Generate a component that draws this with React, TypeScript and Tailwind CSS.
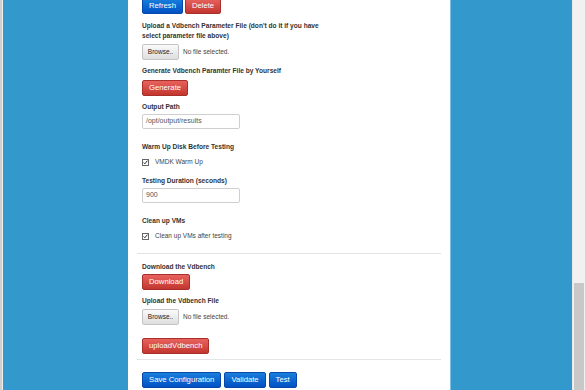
import React from 'react';

const font = { fontFamily: '"Liberation Sans", Arial, sans-serif' };

const Btn = ({ color, children }: { color: 'blue' | 'red'; children: React.ReactNode }) => {
  const tone =
    color === 'blue'
      ? 'from-[#1a7fdc] to-[#0450c4] border-[#0748a8]'
      : 'from-[#e8625d] to-[#c3352f] border-[#a8302b]';
  return (
    <button
      className={`block h-[16px] rounded-[2px] border bg-linear-to-b px-[6px] text-[7.7px] leading-[14px] text-white ${tone}`}
    >
      {children}
    </button>
  );
};

const Label = ({ children, className = '' }: { children: React.ReactNode; className?: string }) => (
  <p className={`text-[6.6px] font-bold leading-[10px] text-[#333] ${className}`}>{children}</p>
);

const FileInput = ({ className = '' }: { className?: string }) => (
  <div className={`flex h-[16px] items-center gap-[4px] ${className}`}>
    <span className="flex h-[16px] w-[37px] items-center justify-center rounded-[2px] border border-[#c4c4c4] bg-linear-to-b from-[#fafafa] to-[#dedede] text-[6.5px] text-[#222]">
      Browse..
    </span>
    <span className="text-[6.5px] text-[#444]">No file selected.</span>
  </div>
);

const TextInput = ({ value, className = '' }: { value: string; className?: string }) => (
  <div
    className={`flex h-[15px] w-[98px] items-center rounded-[2px] border border-[#cfcfcf] bg-white px-[3px] text-[7px] text-[#555] ${className}`}
  >
    {value}
  </div>
);

const Check = ({ text, className = '' }: { text: string; className?: string }) => (
  <div className={`flex h-[10px] items-center gap-[6px] ${className}`}>
    <span className="flex h-[7px] w-[7px] items-center justify-center border border-[#666] bg-white">
      <svg viewBox="0 0 8 8" className="h-[7px] w-[7px]">
        <path d="M1 4 L3 6 L7 1" fill="none" stroke="#111" strokeWidth="1.4" />
      </svg>
    </span>
    <span className="text-[6.5px] text-[#444]">{text}</span>
  </div>
);

export default function App() {
  return (
    <div className="flex h-[390px] w-[585px] overflow-hidden bg-[#3399cc]" style={font}>
      <div className="flex w-[3px] shrink-0">
        <div className="w-[2px] bg-[#cfcfcf]" />
        <div className="w-[1px] bg-[#eeeeee]" />
      </div>
      <div className="w-[125px] shrink-0 bg-[#3399cc]" />
      <div className="w-[322px] shrink-0 bg-white px-[9px]">
        <div className="mt-[-2px] pl-[5px]">
          <div className="flex gap-[2px]">
            <Btn color="blue">Refresh</Btn>
            <Btn color="red">Delete</Btn>
          </div>
          <Label className="mt-[7px]">
            Upload a Vdbench Parameter File (don't do it if you have
            <br />
            select parameter file above)
          </Label>
          <FileInput className="mt-[3px]" />
          <Label className="mt-[6px]">Generate Vdbench Paramter File by Yourself</Label>
          <div className="mt-[4px] flex">
            <Btn color="red">Generate</Btn>
          </div>
          <Label className="mt-[6px]">Output Path</Label>
          <TextInput value="/opt/output/results" className="mt-[2px]" />
          <Label className="mt-[13px]">Warm Up Disk Before Testing</Label>
          <Check text="VMDK Warm Up" className="mt-[5px]" />
          <Label className="mt-[9px]">Testing Duration (seconds)</Label>
          <TextInput value="900" className="mt-[2px]" />
          <Label className="mt-[13px]">Clean up VMs</Label>
          <Check text="Clean up VMs after testing" className="mt-[5px]" />
        </div>
        <div className="mt-[12px] h-px bg-[#e4e4e4]" />
        <div className="pl-[5px]">
          <Label className="mt-[8px]">Download the Vdbench</Label>
          <div className="mt-[2px] flex">
            <Btn color="red">Download</Btn>
          </div>
          <Label className="mt-[6px]">Upload the Vdbench File</Label>
          <FileInput className="mt-[3px]" />
          <div className="mt-[13px] flex">
            <Btn color="red">uploadVdbench</Btn>
          </div>
        </div>
        <div className="mt-[5px] h-px bg-[#e4e4e4]" />
        <div className="mt-[12px] flex gap-[3px] pl-[5px]">
          <Btn color="blue">Save Configuration</Btn>
          <Btn color="blue">Validate</Btn>
          <Btn color="blue">Test</Btn>
        </div>
      </div>
      <div className="w-[122px] shrink-0 border-l border-[#7fc0e2] bg-[#3399cc]" />
      <div className="flex w-[13px] shrink-0 flex-col border-l border-[#e8e8e8] bg-[#f1f1f1]">
        <div className="h-[283px]" />
        <div className="mx-[1px] flex-1 bg-[#c8c8c8]" />
      </div>
    </div>
  );
}
